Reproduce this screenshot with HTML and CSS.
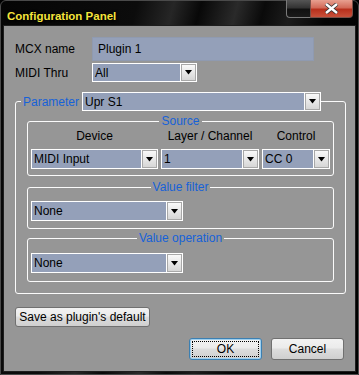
FILE: index.html
```html
<!DOCTYPE html>
<html lang="en">

<head>
    <meta charset="UTF-8" />
    <meta name="viewport" content="width=device-width, initial-scale=1.0" />
    <title>Configuration Panel</title>
    <link rel="stylesheet" href="styles.css">
</head>

<body>
    <div class="window">
        <div class="titlebar">
            <span class="title">Configuration Panel</span>
            <div class="caption">
                <div class="cap-min"></div>
                <div class="cap-close">
                    <svg width="15" height="11" viewBox="0 0 15 11">
                        <path d="M2 1 L13 10 M13 1 L2 10" stroke="#333" stroke-width="4" />
                        <path d="M2 1 L13 10 M13 1 L2 10" stroke="#fff" stroke-width="2.4" />
                    </svg>
                </div>
            </div>
        </div>

        <div class="panel">
            <div class="row">
                <label class="lbl">MCX name</label>
                <div class="textfield">Plugin 1</div>
            </div>
            <div class="row row-thru">
                <label class="lbl">MIDI Thru</label>
                <div class="combo combo-thru">
                    <span class="combo-text">All</span>
                    <span class="combo-btn"><svg width="7" height="5" viewBox="0 0 7 5"><path d="M0 0 H7 L3.5 4.5 Z" fill="#000" /></svg></span>
                </div>
            </div>

            <fieldset class="group group-param">
                <legend class="param-legend">
                    <span class="group-label">Parameter</span>
                    <div class="combo combo-param">
                        <span class="combo-text">Upr S1</span>
                        <span class="combo-btn"><svg width="7" height="5" viewBox="0 0 7 5"><path d="M0 0 H7 L3.5 4.5 Z" fill="#000" /></svg></span>
                    </div>
                </legend>

                <fieldset class="group sub group-source">
                    <legend class="group-label">Source</legend>
                    <div class="source-grid">
                        <span class="col-head">Device</span>
                        <span class="col-head">Layer / Channel</span>
                        <span class="col-head">Control</span>
                        <div class="combo">
                            <span class="combo-text">MIDI Input</span>
                            <span class="combo-btn"><svg width="7" height="5" viewBox="0 0 7 5"><path d="M0 0 H7 L3.5 4.5 Z" fill="#000" /></svg></span>
                        </div>
                        <div class="combo">
                            <span class="combo-text">1</span>
                            <span class="combo-btn"><svg width="7" height="5" viewBox="0 0 7 5"><path d="M0 0 H7 L3.5 4.5 Z" fill="#000" /></svg></span>
                        </div>
                        <div class="combo">
                            <span class="combo-text">CC 0</span>
                            <span class="combo-btn"><svg width="7" height="5" viewBox="0 0 7 5"><path d="M0 0 H7 L3.5 4.5 Z" fill="#000" /></svg></span>
                        </div>
                    </div>
                </fieldset>

                <fieldset class="group sub group-filter">
                    <legend class="group-label">Value filter</legend>
                    <div class="combo combo-wide">
                        <span class="combo-text">None</span>
                        <span class="combo-btn"><svg width="7" height="5" viewBox="0 0 7 5"><path d="M0 0 H7 L3.5 4.5 Z" fill="#000" /></svg></span>
                    </div>
                </fieldset>

                <fieldset class="group sub group-op">
                    <legend class="group-label">Value operation</legend>
                    <div class="combo combo-wide">
                        <span class="combo-text">None</span>
                        <span class="combo-btn"><svg width="7" height="5" viewBox="0 0 7 5"><path d="M0 0 H7 L3.5 4.5 Z" fill="#000" /></svg></span>
                    </div>
                </fieldset>
            </fieldset>

            <button class="btn btn-save">Save as plugin's default</button>

            <div class="actions">
                <button class="btn btn-ok"><span class="focus">OK</span></button>
                <button class="btn">Cancel</button>
            </div>
        </div>
    </div>
</body>

</html>
```

FILE: styles.css
```css
* {
    margin: 0;
    padding: 0;
    box-sizing: border-box;
}

body {
    font-family: 'Liberation Sans', Arial, sans-serif;
    font-size: 12px;
    color: #000;
    background: #000;
}

.window {
    width: 359px;
    height: 375px;
    display: flex;
    flex-direction: column;
    padding: 0 2px 2px 2px;
    border: 1px solid #4a4a4a;
    border-radius: 6px 6px 0 0;
    background: linear-gradient(105deg, #050505 0%, #0c0c0c 30%, #262626 38%, #080808 44%, #2a2a2a 52%, #0a0a0a 58%, #1c1c1c 64%, #050505 72%, #000 100%);
}

.titlebar {
    height: 25px;
    display: flex;
    justify-content: space-between;
    align-items: flex-start;
}

.title {
    padding: 8px 0 0 4px;
    font-weight: bold;
    font-size: 11.5px;
    line-height: 14px;
    color: #f4e43c;
    text-shadow: 0 0 3px #000, 0 0 2px #000;
}

.caption {
    display: flex;
    margin-right: 3px;
    margin-top: -1px;
}

.cap-min {
    width: 24px;
    height: 18px;
    border: 1px solid #7a7a7a;
    border-top: none;
    border-right: none;
    border-radius: 0 0 0 4px;
    background: linear-gradient(#555 0%, #333 45%, #111 55%, #1a1a1a 100%);
}

.cap-close {
    width: 43px;
    height: 18px;
    display: flex;
    align-items: center;
    justify-content: center;
    border: 1px solid #7a5048;
    border-top: none;
    border-radius: 0 0 4px 0;
    background: linear-gradient(#e8a090 0%, #d26a58 45%, #b8301c 55%, #c8503a 100%);
}

.panel {
    flex: 1;
    display: flex;
    flex-direction: column;
    align-items: flex-start;
    background: #969696;
    border: 1px solid #1e1e1e;
    padding: 11px 9px 11px 11px;
}

.row {
    display: flex;
    align-items: center;
}

.row-thru {
    margin-top: 2px;
}

.lbl {
    width: 77px;
}

.textfield {
    width: 222px;
    height: 24px;
    line-height: 22px;
    padding-left: 5px;
    background: #94a0b9;
    border: 1px solid #8f9ab0;
}

.combo {
    display: flex;
    height: 20px;
    border: 1px solid #fff;
    background: #94a0b9;
}

.combo-text {
    flex: 1;
    line-height: 18px;
    padding-left: 2px;
    white-space: nowrap;
    overflow: hidden;
}

.combo-btn {
    width: 16px;
    display: flex;
    align-items: center;
    justify-content: center;
    border-left: 1px solid #fff;
    background: linear-gradient(#fbfbfb, #d4d4d4);
    box-shadow: inset 0 0 0 1px #a8a8a8;
}

.combo-thru {
    width: 105px;
    height: 19px;
}

.group {
    border: 1px solid #fbfbfb;
    border-radius: 3px;
}

.group-param {
    width: 331px;
    margin-top: 10px;
    padding: 0 0 11px 0;
}

.param-legend {
    display: flex;
    align-items: center;
    margin-left: 5px;
    padding-left: 2px;
}

.group-label {
    color: #1662d8;
    line-height: 14px;
}

.combo-param {
    width: 239px;
    height: 19px;
    margin-left: 3px;
}

.sub {
    margin: 0 11px;
}

.sub legend {
    margin: 0 auto;
    padding: 0 2px;
}

.group-source {
    margin-top: 3px;
    padding: 1px 3px 6px;
}

.source-grid {
    display: grid;
    grid-template-columns: 127px 98px 68px;
    column-gap: 3px;
    row-gap: 6px;
}

.col-head {
    text-align: center;
    line-height: 14px;
}

.group-filter {
    margin-top: 4px;
    padding: 7px 3px 7px;
}

.group-op {
    margin-top: 2px;
    padding: 8px 3px 8px;
}

.combo-wide {
    width: 152px;
}

.btn {
    font-family: inherit;
    font-size: 12px;
    color: #000;
    height: 22px;
    width: 73px;
    border: 1px solid #707070;
    border-radius: 3px;
    background: linear-gradient(#f2f2f2 0%, #ebebeb 45%, #dddddd 50%, #cfcfcf 100%);
}

.btn-save {
    width: 135px;
    height: 20px;
    margin-top: 13px;
}

.actions {
    align-self: stretch;
    display: flex;
    justify-content: flex-end;
    gap: 9px;
    margin-top: 11px;
    padding-right: 2px;
}

.btn-ok {
    border-color: #3c7fb1;
    padding: 2px;
    box-shadow: inset 0 0 0 1px #9ed0f0;
}

.focus {
    display: block;
    height: 100%;
    line-height: 14px;
    border: 1px dotted #000;
}
```
